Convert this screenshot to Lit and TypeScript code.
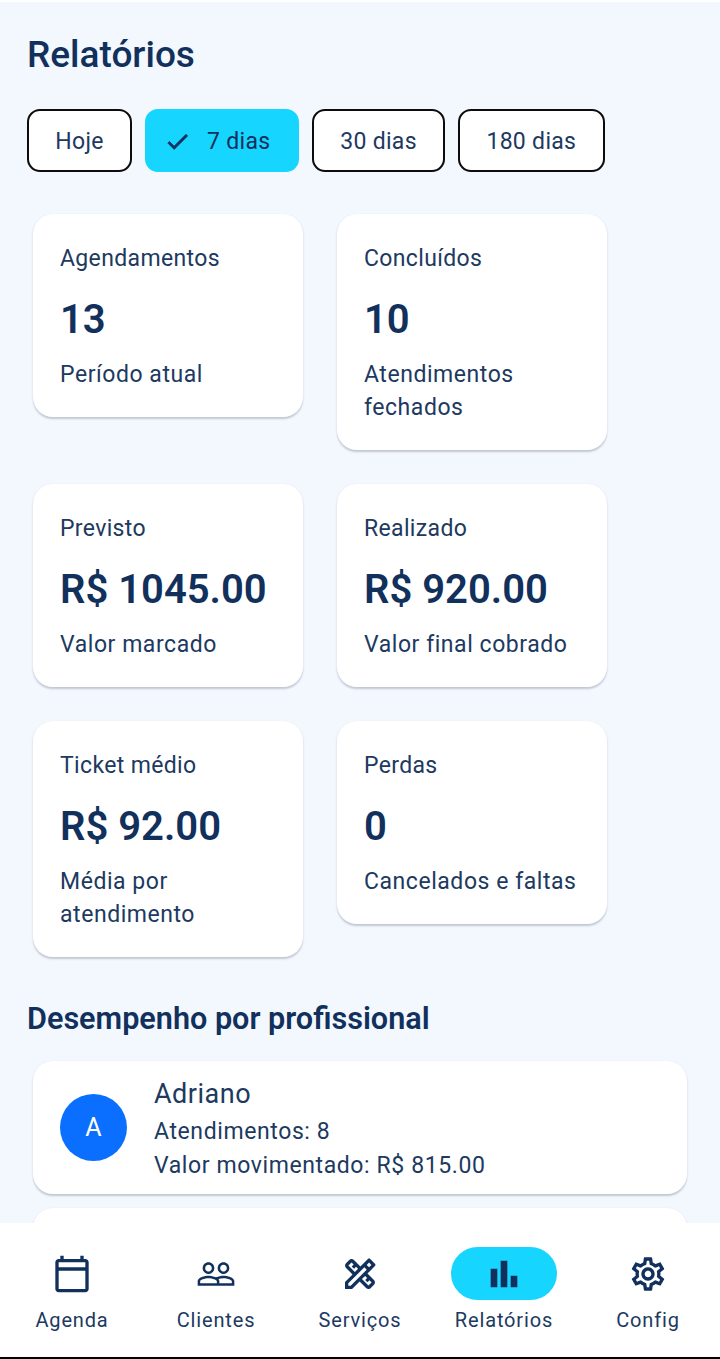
import { LitElement, html, css, svg } from "lit";
import { customElement } from "lit/decorators.js";

const stats = [
  ["Agendamentos", "13", "Período atual"],
  ["Concluídos", "10", "Atendimentos fechados"],
  ["Previsto", "R$ 1045.00", "Valor marcado"],
  ["Realizado", "R$ 920.00", "Valor final cobrado"],
  ["Ticket médio", "R$ 92.00", "Média por atendimento"],
  ["Perdas", "0", "Cancelados e faltas"],
];

const nav = [
  ["Agenda", "M20 3h-1V1h-2v2H7V1H5v2H4c-1.1 0-2 .9-2 2v16c0 1.1.9 2 2 2h16c1.1 0 2-.9 2-2V5c0-1.1-.9-2-2-2zm0 18H4V10h16v11zm0-13H4V5h16v3z"],
  ["Clientes", "M16.5 13c-1.2 0-3.07.34-4.5 1-1.43-.67-3.3-1-4.5-1C5.33 13 1 14.08 1 16.25V19h22v-2.75c0-2.17-4.33-3.25-6.5-3.25zm-4 4.5h-10v-1.25c0-.54 2.56-1.75 5-1.75s5 1.21 5 1.75v1.25zm9 0H14v-1.25c0-.46-.2-.86-.52-1.22.88-.3 1.96-.53 3.02-.53 2.44 0 5 1.21 5 1.75v1.25zM7.5 12c1.93 0 3.5-1.57 3.5-3.5S9.43 5 7.5 5 4 6.57 4 8.5 5.57 12 7.5 12zm0-5.5c1.1 0 2 .9 2 2s-.9 2-2 2-2-.9-2-2 .9-2 2-2zm9 5.5c1.93 0 3.5-1.57 3.5-3.5S18.43 5 16.5 5 13 6.57 13 8.5s1.57 3.5 3.5 3.5zm0-5.5c1.1 0 2 .9 2 2s-.9 2-2 2-2-.9-2-2 .9-2 2-2z"],
  ["Serviços", "M20.97 7.27c.39-.39.39-1.02 0-1.41l-2.83-2.83c-.39-.39-1.02-.39-1.41 0l-4.49 4.49-3.89-3.89c-.78-.78-2.05-.78-2.83 0l-1.9 1.9c-.78.78-.78 2.05 0 2.83l3.89 3.89L3 16.76V21h4.24l4.52-4.52 3.89 3.89c.95.95 2.23.6 2.83 0l1.9-1.9c.78-.78.78-2.05 0-2.83l-3.89-3.89 4.48-4.48zM5.04 6.94l1.89-1.9L8.2 6.31 7.02 7.5l1.41 1.41 1.19-1.19 1.2 1.2-1.9 1.9-3.88-3.88zm11.23 7.44l-1.19 1.19 1.41 1.41 1.19-1.19 1.27 1.27-1.9 1.9-3.89-3.89 1.9-1.9 1.21 1.21zM6.41 19H5v-1.41l9.61-9.61 1.3 1.3.11.11L6.41 19zm9.61-12.44l1.41-1.41 1.41 1.41-1.41 1.41-1.41-1.41z"],
  ["Relatórios", "M4 8.8h4V20H4zM10 4h4v16h-4zM16 13h4v7h-4z"],
  ["Config", "M19.43 12.98c.04-.32.07-.64.07-.98 0-.34-.03-.66-.07-.98l2.11-1.65c.19-.15.24-.42.12-.64l-2-3.46c-.09-.16-.26-.25-.44-.25-.06 0-.12.01-.17.03l-2.49 1c-.52-.4-1.08-.73-1.69-.98l-.38-2.65C14.46 2.18 14.25 2 14 2h-4c-.25 0-.46.18-.49.42l-.38 2.65c-.61.25-1.17.59-1.69.98l-2.49-1c-.06-.02-.12-.03-.18-.03-.17 0-.34.09-.43.25l-2 3.46c-.13.22-.07.49.12.64l2.11 1.65c-.04.32-.07.65-.07.98 0 .33.03.66.07.98l-2.11 1.65c-.19.15-.24.42-.12.64l2 3.46c.09.16.26.25.44.25.06 0 .12-.01.17-.03l2.49-1c.52.4 1.08.73 1.69.98l.38 2.65c.03.24.24.42.49.42h4c.25 0 .46-.18.49-.42l.38-2.65c.61-.25 1.17-.59 1.69-.98l2.49 1c.06.02.12.03.18.03.17 0 .34-.09.43-.25l2-3.46c.12-.22.07-.49-.12-.64l-2.11-1.65zm-1.98-1.71c.04.31.05.52.05.73 0 .21-.02.43-.05.73l-.14 1.13.89.7 1.08.84-.7 1.21-1.27-.51-1.04-.42-.9.68c-.43.32-.84.56-1.25.73l-1.06.43-.16 1.13-.2 1.35h-1.4l-.19-1.35-.16-1.13-1.06-.43c-.43-.18-.83-.41-1.23-.71l-.91-.7-1.06.43-1.27.51-.7-1.21 1.08-.84.89-.7-.14-1.13c-.03-.31-.05-.54-.05-.74s.02-.43.05-.73l.14-1.13-.89-.7-1.08-.84.7-1.21 1.27.51 1.04.42.9-.68c.43-.32.84-.56 1.25-.73l1.06-.43.16-1.13.2-1.35h1.39l.19 1.35.16 1.13 1.06.43c.43.18.83.41 1.23.71l.91.7 1.06-.43 1.27-.51.7 1.21-1.07.85-.89.7.14 1.13zM12 8c-2.21 0-4 1.79-4 4s1.79 4 4 4 4-1.79 4-4-1.79-4-4-4zm0 6c-1.1 0-2-.9-2-2s.9-2 2-2 2 .9 2 2-.9 2-2 2z"],
];

@customElement("app-root")
export class AppRoot extends LitElement {
  static styles = css`
    :host {
      display: flex;
      flex-direction: column;
      height: 1359px;
      width: 720px;
      overflow: hidden;
      background: #f3f8ff;
      border-top: 2px solid #fff;
      border-bottom: 2px solid #000;
      box-sizing: border-box;
      font-family: Roboto, sans-serif;
      color: #20395f;
    }
    .main {
      flex: 1;
      min-height: 0;
      overflow: hidden;
      padding: 30px 27px 0;
    }
    h1 {
      margin: 0;
      font-size: 37px;
      line-height: 46px;
      font-weight: 500;
      color: #12305c;
    }
    .chips {
      display: flex;
      gap: 13px;
      margin-top: 31px;
    }
    .chip {
      height: 63px;
      box-sizing: border-box;
      border: 2px solid #0c0c0c;
      border-radius: 13px;
      background: #fff;
      display: flex;
      align-items: center;
      padding: 2px 26.3px 0;
      font-size: 23px;
      letter-spacing: 0.3px;
      color: #20395f;
    }
    .chip.on {
      background: #16d5ff;
      border-color: #16d5ff;
      color: #12305c;
      gap: 16.5px;
      padding: 2px 26.5px 0 16.5px;
    }
    .chip svg {
      width: 27px;
      height: 27px;
      fill: #12305c;
      stroke: #12305c;
      stroke-width: 0.7;
    }
    .grid {
      display: flex;
      flex-wrap: wrap;
      align-items: flex-start;
      gap: 34px;
      width: 600px;
      margin: 42px 0 0 6px;
    }
    .stat {
      width: 270px;
      box-sizing: border-box;
      background: #fff;
      border-radius: 20px;
      padding: 28px 27px 26px;
      box-shadow: 0 1.5px 2px rgba(20, 30, 50, 0.22);
    }
    .stat .lbl {
      font-size: 23px;
      line-height: 33px;
      letter-spacing: 0.35px;
    }
    .stat .val {
      font-size: 40px;
      line-height: 52px;
      font-weight: 600;
      color: #12305c;
      margin-top: 19px;
    }
    .stat .sub {
      font-size: 23px;
      line-height: 33px;
      letter-spacing: 0.55px;
      margin-top: 12px;
    }
    h2 {
      margin: 44px 0 0;
      font-size: 30.6px;
      line-height: 36px;
      font-weight: 600;
      color: #12305c;
    }
    .pro {
      margin: 24px 6px 0;
      height: 133px;
      box-sizing: border-box;
      background: #fff;
      border-radius: 20px;
      box-shadow: 0 1.5px 2px rgba(20, 30, 50, 0.22);
      display: flex;
      align-items: center;
      padding: 0 27px;
      gap: 27px;
    }
    .pro.next {
      margin-top: 14px;
    }
    .avatar {
      width: 67px;
      height: 67px;
      border-radius: 50%;
      background: #0a6fff;
      color: #fff;
      display: flex;
      align-items: center;
      justify-content: center;
      font-size: 25px;
    }
    .info {
      padding-top: 3px;
    }
    .pro .name {
      font-size: 27px;
      line-height: 36px;
      letter-spacing: 0.5px;
      margin-bottom: 3px;
    }
    .pro .line {
      font-size: 23px;
      line-height: 34px;
      letter-spacing: 0.6px;
    }
    nav {
      flex: none;
      height: 134px;
      background: #fff;
      display: grid;
      grid-template-columns: repeat(5, 144px);
    }
    .item {
      display: flex;
      flex-direction: column;
      align-items: center;
      padding-top: 24px;
    }
    .pill {
      width: 106px;
      height: 53px;
      border-radius: 27px;
      display: flex;
      align-items: center;
      justify-content: center;
    }
    .item.on .pill {
      background: #16d5ff;
    }
    .pill svg {
      width: 40px;
      height: 40px;
      fill: #12305c;
    }
    .item span {
      margin-top: 5px;
      font-size: 20px;
      line-height: 30px;
      letter-spacing: 0.85px;
      color: #20395f;
    }
  `;

  render() {
    return html`
      <div class="main">
        <h1>Relatórios</h1>
        <div class="chips">
          <div class="chip">Hoje</div>
          <div class="chip on">
            <svg viewBox="0 0 24 24"><path d="M9 16.17 4.83 12l-1.42 1.41L9 19 21 7l-1.41-1.41z" /></svg>
            7 dias
          </div>
          <div class="chip">30 dias</div>
          <div class="chip">180 dias</div>
        </div>
        <div class="grid">
          ${stats.map(
            ([a, b, c]) => html`<div class="stat">
              <div class="lbl">${a}</div>
              <div class="val">${b}</div>
              <div class="sub">${c}</div>
            </div>`
          )}
        </div>
        <h2>Desempenho por profissional</h2>
        <div class="pro">
          <div class="avatar">A</div>
          <div class="info">
            <div class="name">Adriano</div>
            <div class="line">Atendimentos: 8</div>
            <div class="line">Valor movimentado: R$ 815.00</div>
          </div>
        </div>
        <div class="pro next"></div>
      </div>
      <nav>
        ${nav.map(
          ([label, d]) => html`<div class="item ${label === "Relatórios" ? "on" : ""}">
            <div class="pill"><svg viewBox="0 0 24 24">${svg`<path d=${d} />`}</svg></div>
            <span>${label}</span>
          </div>`
        )}
      </nav>
    `;
  }
}
